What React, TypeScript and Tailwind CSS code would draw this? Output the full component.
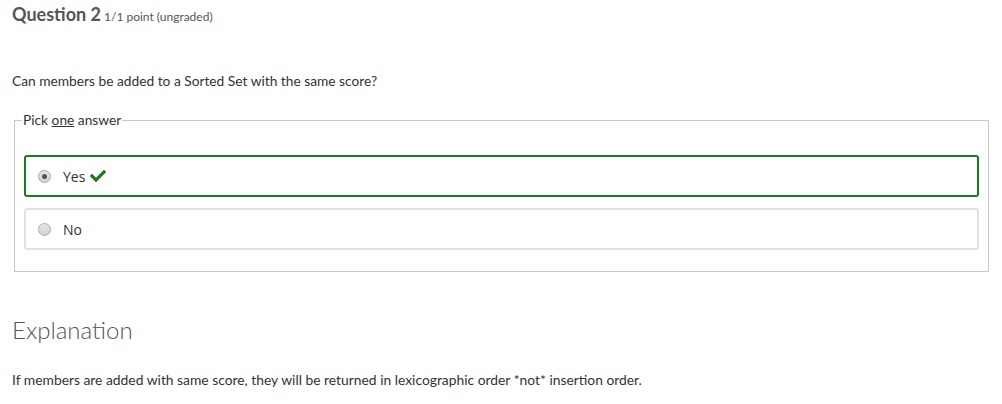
import React from "react";
import { FaCheck } from "react-icons/fa";

function Radio({ checked }: { checked?: boolean }) {
  return (
    <span className="relative inline-flex h-[13px] w-[13px] items-center justify-center rounded-full border border-[#a9a9a9] bg-gradient-to-b from-[#e6e6e6] to-[#d2d2d2]">
      {checked && <span className="h-[5px] w-[5px] rounded-full bg-[#555]" />}
    </span>
  );
}

export default function App() {
  return (
    <div className="bg-white w-[1002px] h-[404px] text-[#333]" style={{ fontFamily: "Lato, 'Open Sans', sans-serif" }}>
      <div className="pl-[12px] pt-[2px]">
        <h3 className="flex items-baseline text-[#555] leading-[24px]">
          <span className="text-[18px] font-bold">Question 2</span>
          <span className="ml-[3px] text-[12px]">1/1 point (ungraded)</span>
        </h3>
        <p className="mt-[44px] text-[13.75px] leading-[16px]">Can members be added to a Sorted Set with the same score?</p>
      </div>
      <fieldset className="ml-[14px] mr-[13px] mt-[23px] border border-[#c8c8c8] px-[9px] pb-[21px]">
        <legend className="px-[1px] -ml-[2px] text-[13.75px] leading-[16px] text-[#333]">
          Pick <span className="underline">one</span> answer
        </legend>
        <div className="mt-[27px] flex h-[42px] items-center rounded-[3px] border-2 border-[#1d7a1d] pl-[12px]" style={{ fontFamily: "'Open Sans', sans-serif" }}>
          <Radio checked />
          <span className="ml-[12px] text-[14px] text-[#333]">Yes</span>
          <FaCheck className="ml-[5px] text-[#1d7a1d]" size={16} />
        </div>
        <div className="mt-[11px] flex h-[42px] items-center rounded-[3px] border-2 border-[#e2e2e2] pl-[12px]" style={{ fontFamily: "'Open Sans', sans-serif" }}>
          <Radio />
          <span className="ml-[12px] text-[14px] text-[#333]">No</span>
        </div>
      </fieldset>
      <div className="pl-[12px]">
        <h2 className="mt-[43px] text-[24px] font-light leading-[30px] text-[#555]">Explanation</h2>
        <p className="mt-[27px] text-[13.85px] leading-[16px]">If members are added with same score, they will be returned in lexicographic order *not* insertion order.</p>
      </div>
    </div>
  );
}
